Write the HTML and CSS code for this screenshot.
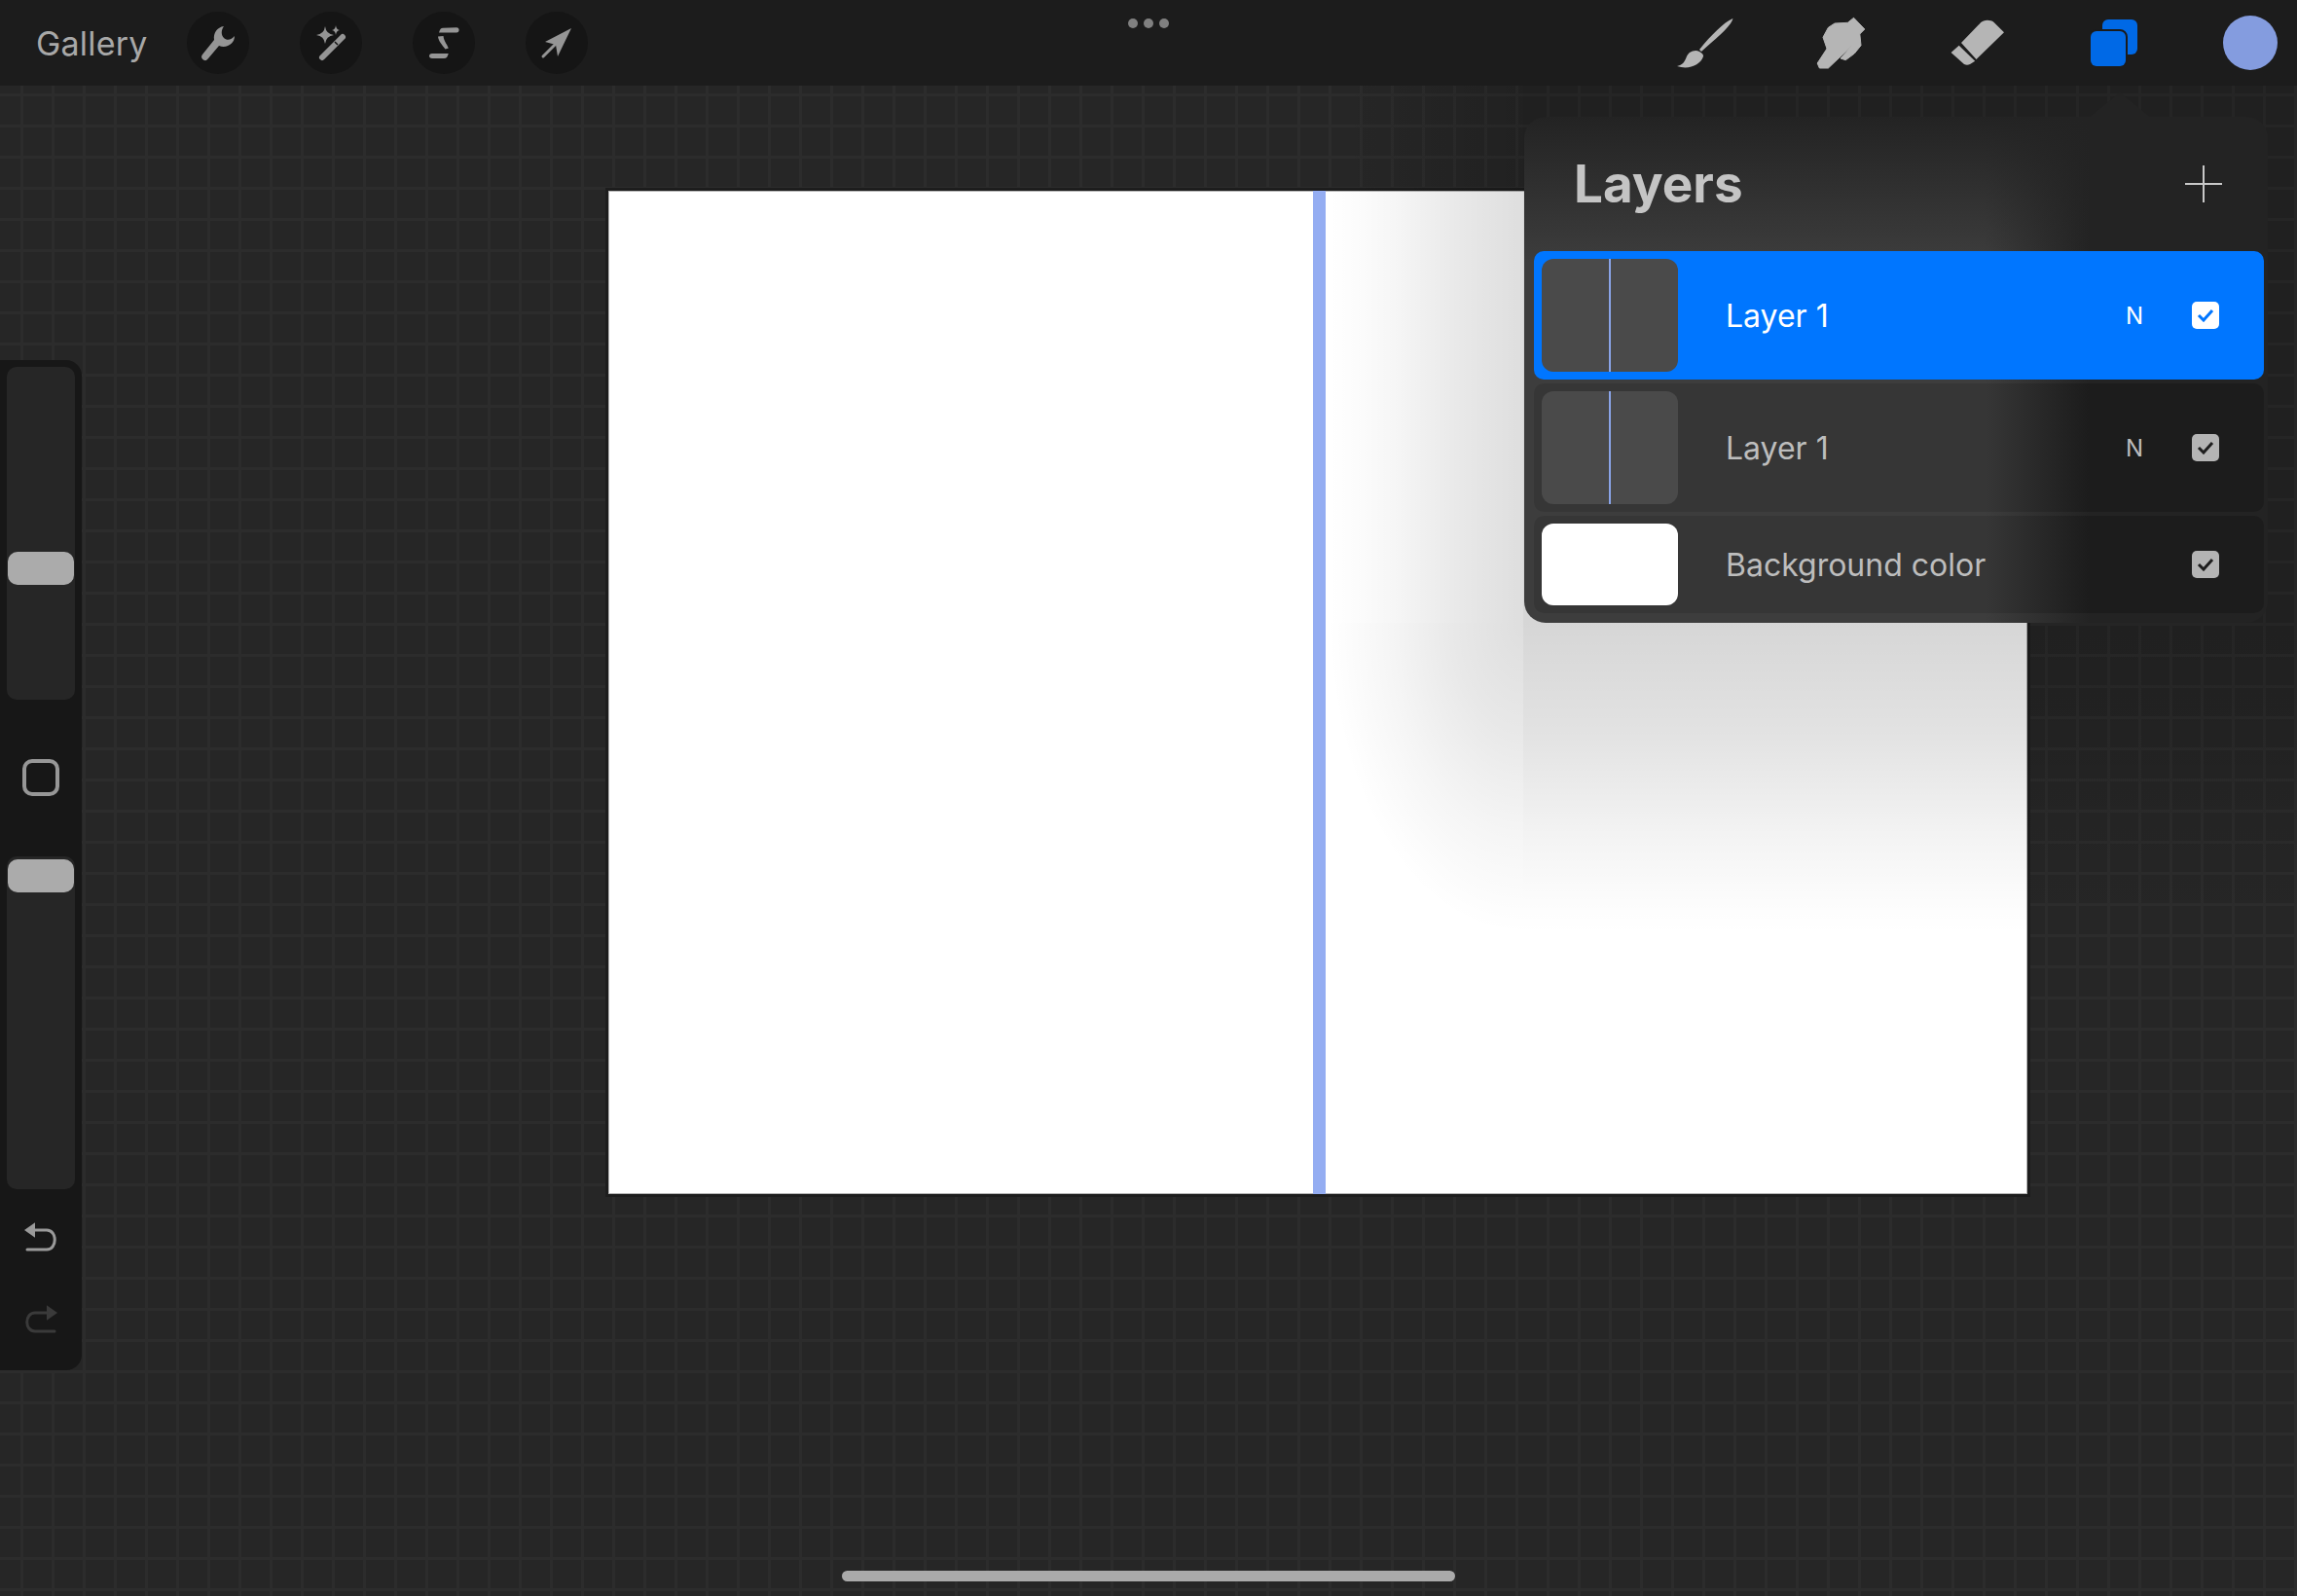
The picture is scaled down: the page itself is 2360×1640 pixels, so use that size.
FILE: index.html
```html
<!DOCTYPE html>
<html lang="en">
<head>
    <meta charset="UTF-8">
    <meta name="viewport" content="width=device-width, initial-scale=1.0">
    <title>Layers</title>
    <link rel="stylesheet" href="styles.css">
</head>
<body>
    <div class="app">
        <header class="topbar">
            <div class="tools-left">
                <span class="gallery">Gallery</span>
                <div class="tool-round">
                    <svg width="64" height="64" viewBox="0 0 64 64"><path d="M38 15C31 16 27 22 28 29L16 44C14 46.5 15.5 49 18 50C19.5 50.5 21 49.5 22 48L33 35C41 38 49 33 49 25C46 29 41 30 38 27C35 24 35 19 38 15Z" fill="#959595"/></svg>
                </div>
                <div class="tool-round">
                    <svg width="64" height="64" viewBox="0 0 64 64">
                        <path d="M26 15Q27 23 35 24Q27 25 26 33Q25 25 17 24Q25 23 26 15Z" fill="#959595"/>
                        <path d="M37 14Q37.500 18.500 41 19Q37.500 19.500 37 24Q36.500 19.500 33 19Q36.500 18.500 37 14Z" fill="#959595"/>
                        <path d="M23 47L44 26" stroke="#959595" stroke-width="6" stroke-linecap="round"/>
                        <path d="M36 31L39 34" stroke="#151515" stroke-width="1.500"/>
                    </svg>
                </div>
                <div class="tool-round">
                    <svg width="64" height="64" viewBox="0 0 64 64" fill="#959595">
                        <path d="M27 21.500C28 18 29 17 31 16.800L45 16.300C48.500 16.300 48.500 21.500 45 21.500Z"/>
                        <path d="M26 25.500L31.500 25C32 30 35 33 36.800 37.500L33.500 38.500C30 34 26.500 30 26 25.500Z"/>
                        <path d="M20 43H36.700C36 46 35 48 32 48H20C16 48 16 43 20 43Z"/>
                    </svg>
                </div>
                <div class="tool-round">
                    <svg width="64" height="64" viewBox="0 0 64 64">
                        <path d="M47 17L20 31L31 34L33 46Z" fill="#959595"/>
                        <path d="M18 46L33 31" stroke="#959595" stroke-width="3" stroke-linecap="round"/>
                    </svg>
                </div>
            </div>
            <div class="dots"><i></i><i></i><i></i></div>
            <div class="tools-right">
                <svg class="icon-brush" width="64" height="56" viewBox="0 0 64 56">
                    <path d="M60.500 3C52 6 38 20 26 35L28 37C42 24 58 12 60.500 3Z" fill="#b5b5b5"/>
                    <path d="M26 37C23 35 19 36 16 38C11 42 13 50 3 52C15 56 27 51 30 42C30.500 40 28 38 26 37Z" fill="#b5b5b5"/>
                </svg>
                <svg class="icon-smudge" width="54" height="56" viewBox="0 0 54 56">
                    <path d="M39.600 2.300L50.800 14L45.800 19L47 30.700L40.300 39L31.300 45.700L26 44L38 30.700L13.400 54H4.400L2.200 49L12 34L8 22.300L13.400 12.300L20 8L33.400 7.300Z" fill="#b5b5b5" stroke="#b5b5b5" stroke-linejoin="round"/>
                </svg>
                <svg class="icon-eraser" width="56" height="48" viewBox="0 0 56 48">
                    <path d="M31 3.300C34 0 41 0 44.400 2.700L55 13.300L26.500 41L11 24Z" fill="#b5b5b5"/>
                    <path d="M8.700 26.700L25.200 42.700L20 46C18 47 16 47 14 46L0.600 34Z" fill="#b5b5b5"/>
                </svg>
                <svg class="icon-layers" width="48" height="48" viewBox="0 0 48 48">
                    <rect x="12" y="0" width="36" height="36" rx="6" fill="#0069e6"/>
                    <rect x="-2" y="10" width="40" height="40" rx="8" fill="#1b1b1b"/>
                    <rect x="0" y="12" width="36" height="36" rx="6" fill="#0069e6"/>
                </svg>
                <div class="color-dot"></div>
            </div>
        </header>

        <div class="canvas">
            <div class="stroke-line"></div>
        </div>

        <div class="panel-shadow"></div>

        <aside class="sidebar">
            <div class="slider slider-size"><div class="handle"></div></div>
            <div class="modify"></div>
            <div class="slider slider-opacity"><div class="handle"></div></div>
            <svg class="undo" width="42" height="32" viewBox="0 0 42 32" fill="none">
                <path d="M1 9L12 1.300V16.700Z" fill="#9a9a9a"/>
                <path d="M12 9H24C35 9 35 29 24 29H4" stroke="#9a9a9a" stroke-width="3" stroke-linecap="round"/>
            </svg>
            <svg class="redo" width="42" height="32" viewBox="0 0 42 32" fill="none">
                <path d="M35 9L24 1.300V16.700Z" fill="#3a3a3a"/>
                <path d="M24 9H12C1 9 1 28 12 28H32" stroke="#3a3a3a" stroke-width="3" stroke-linecap="round"/>
            </svg>
        </aside>

        <section class="layers-panel">
            <svg class="panel-arrow" width="64" height="26" viewBox="0 0 64 26"><path d="M0 26L32 0L64 26Z" fill="#232323"/></svg>
            <div class="panel-head">
                <h1>Layers</h1>
                <svg width="38" height="38" viewBox="0 0 38 38"><path d="M19 0V38M0 19H38" stroke="#c8c8c8" stroke-width="2"/></svg>
            </div>
            <div class="layer-row active">
                <div class="thumb"><div class="thumb-line"></div></div>
                <span class="layer-name">Layer 1</span>
                <span class="blend">N</span>
                <div class="check"><svg width="18" height="14" viewBox="0 0 18 14"><path d="M2 7L7 12L16 2" fill="none" stroke="#0076ff" stroke-width="3"/></svg></div>
            </div>
            <div class="layer-row">
                <div class="thumb"><div class="thumb-line"></div></div>
                <span class="layer-name">Layer 1</span>
                <span class="blend">N</span>
                <div class="check"><svg width="18" height="14" viewBox="0 0 18 14"><path d="M2 7L7 12L16 2" fill="none" stroke="#1e1e1e" stroke-width="3"/></svg></div>
            </div>
            <div class="layer-row bg-row">
                <div class="thumb white"></div>
                <span class="layer-name">Background color</span>
                <div class="check"><svg width="18" height="14" viewBox="0 0 18 14"><path d="M2 7L7 12L16 2" fill="none" stroke="#1e1e1e" stroke-width="3"/></svg></div>
            </div>
        </section>

        <div class="home-bar"></div>
    </div>
</body>
</html>
```
FILE: styles.css
```css
html, body {
    margin: 0;
    padding: 0;
}
body {
    font-family: Inter, "Liberation Sans", sans-serif;
}
.app {
    position: relative;
    width: 2360px;
    height: 1640px;
    overflow: hidden;
    background-color: #262626;
    background-image:
        linear-gradient(#2c2c2c 3px, transparent 3px),
        linear-gradient(90deg, #2c2c2c 3px, transparent 3px);
    background-size: 32px 32px;
    background-position: 0 0, 21px 0;
}

/* top bar */
.topbar {
    position: relative;
    z-index: 3;
    height: 88px;
    background: #1c1c1c;
    display: flex;
    align-items: center;
    justify-content: space-between;
    padding: 0 20px 0 37px;
}
.tools-left {
    display: flex;
    align-items: center;
    gap: 52px;
}
.gallery {
    color: #a8a8a8;
    font-size: 34px;
    width: 103px;
    letter-spacing: 0.2px;
}
.tool-round {
    width: 64px;
    height: 64px;
    border-radius: 50%;
    background: #151515;
}
.tool-round svg {
    display: block;
}
.dots {
    position: absolute;
    left: 1159px;
    top: 19px;
    display: flex;
    gap: 6px;
}
.dots i {
    width: 10px;
    height: 10px;
    border-radius: 50%;
    background: #808080;
}
.tools-right {
    display: flex;
    align-items: center;
}
.tools-right svg {
    display: block;
}
.icon-smudge {
    margin-left: 81px;
}
.icon-eraser {
    margin-left: 85px;
}
.icon-layers {
    margin-left: 88px;
}
.color-dot {
    width: 56px;
    height: 56px;
    border-radius: 50%;
    background: #849cdf;
    margin-left: 88px;
}

/* drawing */
.canvas {
    position: relative;
    width: 1458px;
    height: 1031px;
    margin: 108px 0 0 625px;
    background: #fff;
    box-shadow: 0 0 0 3px #1d1d1d, inset 0 0 0 1px #b4b4b4;
}
.stroke-line {
    position: absolute;
    left: 724px;
    top: 0;
    bottom: 0;
    width: 13px;
    background: #94adf2;
}

/* soft shadow the panel drops on the drawing */
.panel-shadow {
    position: absolute;
    left: 1365px;
    top: 88px;
    right: 0;
    height: 872px;
    z-index: 1;
    background-repeat: no-repeat;
    background-image:
        radial-gradient(ellipse 200px 320px at 100% 0, rgba(0, 0, 0, 0.13) 0, rgba(0, 0, 0, 0.09) 35%, rgba(0, 0, 0, 0.038) 68%, rgba(0, 0, 0, 0.01) 90%, rgba(0, 0, 0, 0) 100%),
        linear-gradient(180deg, rgba(0, 0, 0, 0.16) 0, rgba(0, 0, 0, 0.115) 35%, rgba(0, 0, 0, 0.047) 68%, rgba(0, 0, 0, 0.012) 90%, rgba(0, 0, 0, 0) 100%),
        linear-gradient(90deg, rgba(0, 0, 0, 0) 0, rgba(0, 0, 0, 0.01) 14%, rgba(0, 0, 0, 0.038) 36%, rgba(0, 0, 0, 0.09) 68%, rgba(0, 0, 0, 0.13) 100%),
        linear-gradient(rgba(0, 0, 0, 0.16), rgba(0, 0, 0, 0.16));
    background-size: 200px 320px, 795px 320px, 200px 552px, 795px 552px;
    background-position: 0 552px, 200px 552px, 0 0, 200px 0;
}

/* left sliders */
.sidebar {
    position: absolute;
    left: 0;
    top: 370px;
    z-index: 2;
    width: 84px;
    height: 1038px;
    box-sizing: border-box;
    padding-top: 7px;
    background: #171717;
    border-radius: 0 16px 16px 0;
    display: flex;
    flex-direction: column;
    align-items: center;
}
.slider {
    position: relative;
    width: 70px;
    height: 342px;
    background: #262626;
    border-radius: 10px;
    flex-shrink: 0;
}
.handle {
    position: absolute;
    left: 1px;
    right: 1px;
    height: 34px;
    background: #ababab;
    border-radius: 10px;
}
.slider-size .handle {
    top: 190px;
}
.slider-opacity .handle {
    top: 3px;
}
.modify {
    box-sizing: border-box;
    width: 38px;
    height: 38px;
    margin: 61px 0 62px;
    border: 4px solid #979797;
    border-radius: 10px;
    flex-shrink: 0;
}
.undo {
    margin: 33px 0 0 6px;
}
.redo {
    margin: 53px 0 0 6px;
}

/* layers panel */
.layers-panel {
    position: absolute;
    left: 1566px;
    top: 120px;
    z-index: 2;
    width: 764px;
    height: 520px;
    box-sizing: border-box;
    padding: 0 4px 0 10px;
    border-radius: 22px;
    background:
        linear-gradient(180deg, #232323 0, rgba(35, 35, 35, 0) 150px),
        linear-gradient(90deg, #3d3d3d 0, #3d3d3d 62%, #232323 76%);
}
.panel-arrow {
    position: absolute;
    left: 580px;
    top: -25px;
}
.panel-head {
    height: 138px;
    display: flex;
    align-items: center;
    justify-content: space-between;
    padding: 0 43px 0 41px;
}
.panel-head h1 {
    margin: 0;
    color: #c4c4c4;
    font-size: 53px;
    font-weight: 700;
}
.panel-head svg {
    display: block;
}
.layer-row {
    height: 132px;
    margin-bottom: 4px;
    box-sizing: border-box;
    padding: 8px 0 8px 8px;
    display: flex;
    align-items: center;
    border-radius: 10px;
    background: linear-gradient(90deg, #363636 0, #363636 62%, #1c1c1c 76%);
    color: #bdbdbd;
}
.layer-row.active {
    background: #0076ff;
    color: #fff;
}
.layer-row.bg-row {
    height: 100px;
    margin-bottom: 0;
}
.thumb {
    position: relative;
    width: 140px;
    height: 100%;
    background: #4a4a4a;
    border-radius: 12px;
    flex-shrink: 0;
}
.thumb.white {
    background: #fff;
}
.thumb-line {
    position: absolute;
    left: 69px;
    top: 0;
    bottom: 0;
    width: 2px;
    background: #8aa4e8;
}
.layer-name {
    margin-left: 49px;
    font-size: 32px;
    flex: 1;
}
.blend {
    font-size: 24px;
    margin-right: 50px;
}
.check {
    width: 28px;
    height: 28px;
    margin-right: 46px;
    border-radius: 5px;
    background: #b4b4b4;
    display: flex;
    align-items: center;
    justify-content: center;
}
.active .check {
    background: #fff;
}

.home-bar {
    position: absolute;
    left: 865px;
    top: 1614px;
    width: 630px;
    height: 11px;
    border-radius: 6px;
    background: #aaaaaa;
}
```
